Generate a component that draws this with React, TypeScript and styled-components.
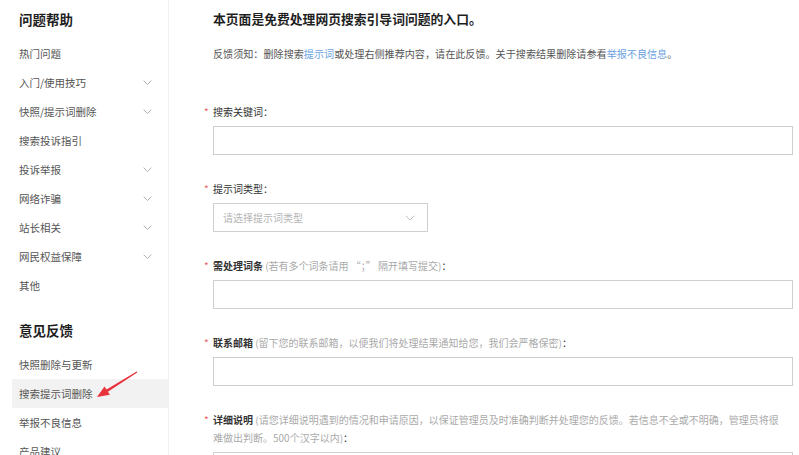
import React from "react";
import styled, { createGlobalStyle } from "styled-components";

const GlobalStyle = createGlobalStyle`
  html, body {
    margin: 0;
    padding: 0;
    background: #fff;
    font-family: "Noto Sans CJK SC", "Noto Sans", sans-serif;
  }
`;

const helpItems = [
  { label: "热门问题" },
  { label: "入门/使用技巧", more: true },
  { label: "快照/提示词删除", more: true },
  { label: "搜索投诉指引" },
  { label: "投诉举报", more: true },
  { label: "网络诈骗", more: true },
  { label: "站长相关", more: true },
  { label: "网民权益保障", more: true },
  { label: "其他" },
];

const feedbackItems = [
  { label: "快照删除与更新" },
  { label: "搜索提示词删除", active: true },
  { label: "举报不良信息" },
  { label: "产品建议" },
];

function Chevron({ size = 9, color = "#a8a8a8" }: { size?: number; color?: string }) {
  return (
    <svg width={size} height={size * 0.6} viewBox="0 0 10 6" fill="none">
      <polyline
        points="1,1 5,5 9,1"
        stroke={color}
        strokeWidth="1"
        strokeLinecap="round"
        strokeLinejoin="round"
      />
    </svg>
  );
}

function App() {
  return (
    <Page>
      <GlobalStyle />
      <Sidebar>
        <SideTitle>问题帮助</SideTitle>
        {helpItems.map((item) => (
          <SideItem key={item.label}>
            <span>{item.label}</span>
            {item.more && <Chevron />}
          </SideItem>
        ))}
        <SideTitle $spaced>意见反馈</SideTitle>
        {feedbackItems.map((item) => (
          <SideItem key={item.label} $active={item.active}>
            <span>{item.label}</span>
          </SideItem>
        ))}
        {/* annotation arrow pointing at the active item */}
        <Arrow width="52" height="36" viewBox="0 0 52 36">
          <polygon
            points="7,30 19.9,27.8 17.9,24.7 47.3,5.4 46.7,4.6 16.5,22.5 14.5,19.4"
            fill="#e8323c"
          />
        </Arrow>
      </Sidebar>
      <Main>
        <Title>本页面是免费处理网页搜索引导词问题的入口。</Title>
        <Notice>
          反馈须知：删除搜索<Link>提示词</Link>或处理右侧推荐内容，请在此反馈。关于搜索结果删除请参看
          <Link>举报不良信息</Link>。
        </Notice>
        <Form>
          <Field>
            <Label>
              <Star>*</Star>搜索关键词：
            </Label>
            <TextBox />
          </Field>
          <Field>
            <Label>
              <Star>*</Star>提示词类型：
            </Label>
            <Select>
              <span>请选择提示词类型</span>
              <Chevron size={10} color="#bdbdbd" />
            </Select>
          </Field>
          <Field>
            <Label>
              <Star>*</Star>
              <b>需处理词条</b>
              <Hint> (若有多个词条请用 “；” 隔开填写提交)</Hint>：
            </Label>
            <TextBox />
          </Field>
          <Field>
            <Label>
              <Star>*</Star>
              <b>联系邮箱</b>
              <Hint> (留下您的联系邮箱，以便我们将处理结果通知给您，我们会严格保密)</Hint>：
            </Label>
            <TextBox />
          </Field>
          <Field>
            <Label>
              <Star>*</Star>
              <b>详细说明</b>
              <Hint>
                {" "}
                (请您详细说明遇到的情况和申请原因，以保证管理员及时准确判断并处理您的反馈。若信息不全或不明确，管理员将很难做出判断。500个汉字以内)
              </Hint>
              ：
            </Label>
            <TextBox />
          </Field>
        </Form>
      </Main>
    </Page>
  );
}

const Page = styled.div`
  display: flex;
  width: 799px;
  height: 455px;
  overflow: hidden;
`;

const Sidebar = styled.nav`
  position: relative;
  flex: 0 0 156px;
  padding-left: 12px;
  border-right: 1px solid #f1f1f1;
`;

const SideTitle = styled.div<{ $spaced?: boolean }>`
  height: 39px;
  line-height: 39px;
  padding-left: 7px;
  margin-top: ${(p) => (p.$spaced ? "11px" : "0")};
  font-size: 13.5px;
  font-weight: 700;
  color: #1f1f1f;
`;

const SideItem = styled.div<{ $active?: boolean }>`
  display: flex;
  align-items: center;
  justify-content: space-between;
  height: 29px;
  padding: 0 16px 0 7px;
  font-size: 10.5px;
  color: #555;
  background: ${(p) => (p.$active ? "#f2f2f2" : "transparent")};
`;

const Arrow = styled.svg`
  position: absolute;
  left: 90px;
  top: 367px;
`;

const Main = styled.main`
  flex: 1;
  padding: 0 6px 0 44px;
`;

const Title = styled.h1`
  margin: 0;
  height: 38px;
  line-height: 38px;
  font-size: 12.8px;
  font-weight: 700;
  color: #1f1f1f;
`;

const Notice = styled.p`
  margin: 7px 0 0;
  line-height: 18px;
  font-size: 10.1px;
  color: #555;
`;

const Link = styled.span`
  color: #6b9fe0;
`;

const Form = styled.form`
  display: flex;
  flex-direction: column;
  gap: 25px;
  margin-top: 40px;
`;

const Field = styled.div`
  display: flex;
  flex-direction: column;
  gap: 5px;
`;

const Label = styled.label`
  padding-right: 6px;
  line-height: 18px;
  font-size: 10px;
  color: #333;

  b {
    font-weight: 700;
    color: #333;
  }
`;

const Star = styled.span`
  display: inline-block;
  width: 9px;
  margin-left: -9px;
  color: #e86060;
`;

const Hint = styled.span`
  color: #aaa;
`;

const TextBox = styled.div`
  box-sizing: border-box;
  height: 29px;
  border: 1px solid #cfcfcf;
  background: #fff;
`;

const Select = styled.div`
  box-sizing: border-box;
  display: flex;
  align-items: center;
  justify-content: space-between;
  width: 215px;
  height: 29px;
  padding: 0 12px 0 9px;
  border: 1px solid #cfcfcf;
  font-size: 10px;
  color: #b5b5b5;
`;

export default App;
